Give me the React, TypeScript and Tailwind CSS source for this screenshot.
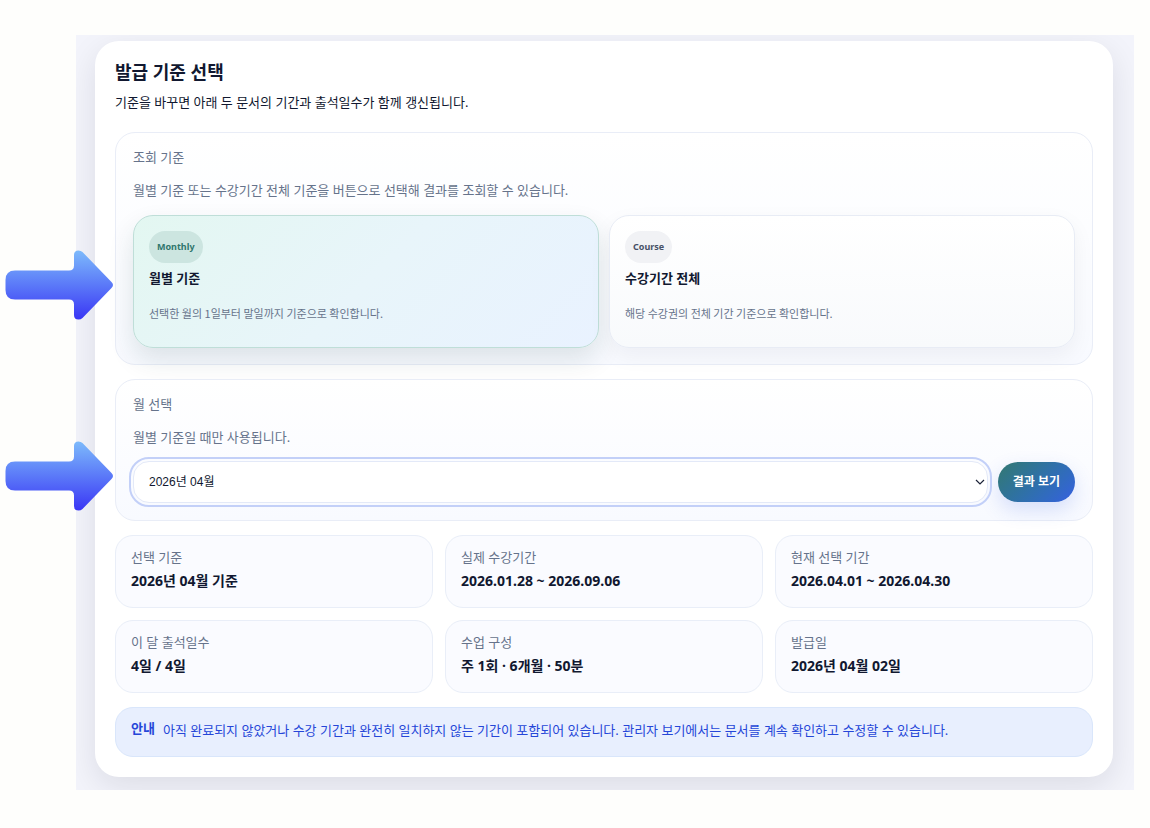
import { useState } from "react";
import clsx from "clsx";

type Basis = "monthly" | "course";

const bases: { id: Basis; badge: string; title: string; description: string }[] = [
  {
    id: "monthly",
    badge: "Monthly",
    title: "월별 기준",
    description: "선택한 월의 1일부터 말일까지 기준으로 확인합니다.",
  },
  {
    id: "course",
    badge: "Course",
    title: "수강기간 전체",
    description: "해당 수강권의 전체 기간 기준으로 확인합니다.",
  },
];

const stats = [
  { label: "선택 기준", value: "2026년 04월 기준" },
  { label: "실제 수강기간", value: "2026.01.28 ~ 2026.09.06" },
  { label: "현재 선택 기간", value: "2026.04.01 ~ 2026.04.30" },
  { label: "이 달 출석일수", value: "4일 / 4일" },
  { label: "수업 구성", value: "주 1회 · 6개월 · 50분" },
  { label: "발급일", value: "2026년 04월 02일" },
];

function Arrow({ id, className }: { id: string; className: string }) {
  return (
    <svg
      aria-hidden="true"
      width="110"
      height="72"
      viewBox="0 0 110 72"
      className={clsx("pointer-events-none absolute left-1", className)}
    >
      <defs>
        <linearGradient id={id} x1="0" y1="0" x2="0" y2="1">
          <stop offset="0" stopColor="#7dbafb" />
          <stop offset="0.5" stopColor="#5b79f8" />
          <stop offset="1" stopColor="#3a36f5" />
        </linearGradient>
      </defs>
      <path
        d="M11 21.5H65Q70 21.5 70 16.5V6Q70 1.5 74.5 1.5Q76.8 1.5 78.5 3L107.5 33Q110.500 36 107.5 39L78.5 69Q76.8 70.5 74.5 70.5Q70 70.5 70 66V55.5Q70 50.5 65 50.5H11Q1.5 50.5 1.5 41V31Q1.5 21.5 11 21.5Z"
        fill={`url(#${id})`}
      />
    </svg>
  );
}

const sectionClass =
  "rounded-[20px] border border-[#e9edf7] bg-linear-to-b from-white to-[#f8faff] px-[17px] pt-3.5";

export default function App() {
  const [basis, setBasis] = useState<Basis>("monthly");

  return (
    <main className="relative min-h-screen bg-[#fefefc] pt-[35px] pr-4 pb-9 pl-[76px] font-['Noto_Sans','Noto_Sans_CJK_KR',sans-serif] text-[13px] leading-5 text-[#111830]">
      <div className="overflow-hidden bg-[#f3f4fb] pt-1.5 pr-[21px] pb-[13px] pl-[19px]">
        <div className="rounded-[24px] bg-white p-5 shadow-[0_10px_32px_rgba(20,24,40,0.10)]">
          <h1 className="text-[18px] leading-[22px] font-bold">발급 기준 선택</h1>
          <p className="mt-[9px]">기준을 바꾸면 아래 두 문서의 기간과 출석일수가 함께 갱신됩니다.</p>

          <div className="mt-5 flex flex-col gap-3.5">
            <section aria-labelledby="basis-title" className={clsx(sectionClass, "pb-4")}>
              <h2 id="basis-title" className="text-[#66738b]">
                조회 기준
              </h2>
              <p className="mt-[13px] text-[#66738b]">
                월별 기준 또는 수강기간 전체 기준을 버튼으로 선택해 결과를 조회할 수 있습니다.
              </p>
              <div className="mt-[15px] grid grid-cols-2 gap-2.5">
                {bases.map((item) => {
                  const active = item.id === basis;
                  return (
                    <button
                      key={item.id}
                      type="button"
                      aria-pressed={active}
                      onClick={() => setBasis(item.id)}
                      className={clsx(
                        "flex flex-col items-start rounded-[20px] border px-[15px] pt-[15px] pb-6 text-left",
                        active
                          ? "border-[#bfded8] bg-linear-135 from-[#e3f7f1] via-[#e8f5fa] to-[#e9f2ff] shadow-[0_12px_26px_rgba(15,60,60,0.12)]"
                          : "border-[#e8ecf5] bg-linear-to-b from-white to-[#f8fafc] shadow-[0_8px_22px_rgba(15,23,42,0.05)]",
                      )}
                    >
                      <span
                        className={clsx(
                          "rounded-full px-2 text-[9px] leading-8 font-bold",
                          active ? "bg-[#cce5e0] text-[#2f766d]" : "bg-[#f1f2f5] text-[#475167]",
                        )}
                      >
                        {item.badge}
                      </span>
                      <strong className="mt-[5px] font-bold">{item.title}</strong>
                      <span className="mt-[15px] font-['Noto_Sans_CJK_KR',sans-serif] text-[11px] text-[#66738b]">
                        {item.description}
                      </span>
                    </button>
                  );
                })}
              </div>
            </section>

            <section className={clsx(sectionClass, "pb-[17px]")}>
              <label htmlFor="month" className="block text-[#66738b]">
                월 선택
              </label>
              <p id="month-hint" className="mt-[13px] text-[#66738b]">
                월별 기준일 때만 사용됩니다.
              </p>
              <div className="mt-3.5 flex items-center gap-2.5">
                <div className="relative grow">
                  <select
                    id="month"
                    aria-describedby="month-hint"
                    defaultValue="2026-04"
                    className="block h-[42px] w-full appearance-none rounded-[16px] border border-[#e3e9f8] bg-white px-[15px] font-['Liberation_Sans','Noto_Sans_CJK_KR',sans-serif] text-[12px] outline-2 outline-offset-2 outline-[#c3d0f8]"
                  >
                    <option value="2026-04">2026년 04월</option>
                  </select>
                  <svg
                    aria-hidden="true"
                    width="10"
                    height="6"
                    viewBox="0 0 10 6"
                    fill="none"
                    stroke="#1c2338"
                    strokeWidth="1.2"
                    className="pointer-events-none absolute top-[18px] right-[3px]"
                  >
                    <path d="M1 1L5 5L9 1" />
                  </svg>
                </div>
                <button
                  type="button"
                  className="h-10 rounded-full bg-linear-135 from-[#34786f] to-[#375fe0] px-[15px] text-[12px] font-bold text-white shadow-[0_8px_20px_rgba(55,95,230,0.18)]"
                >
                  결과 보기
                </button>
              </div>
            </section>

            <dl className="grid grid-cols-3 gap-3">
              {stats.map((stat) => (
                <div
                  key={stat.label}
                  className="rounded-[18px] border border-[#e9eef8] bg-[#fafbff] px-[15px] pt-[11px] pb-4"
                >
                  <dt className="text-[#66738b]">{stat.label}</dt>
                  <dd className="mt-1 text-[14px] leading-5 font-bold">{stat.value}</dd>
                </div>
              ))}
            </dl>

            <div
              role="note"
              className="flex items-start gap-2 rounded-[18px] border border-[#d9e6fb] bg-[#e8effe] px-[15px] pt-2.5 pb-4 text-[#2546d8]"
            >
              <strong className="shrink-0 font-bold">안내</strong>
              <p className="pt-0.5">
                아직 완료되지 않았거나 수강 기간과 완전히 일치하지 않는 기간이 포함되어 있습니다. 관리자
                보기에서는 문서를 계속 확인하고 수정할 수 있습니다.
              </p>
            </div>
          </div>
        </div>
      </div>

      <Arrow id="arrow-basis" className="top-[249px]" />
      <Arrow id="arrow-month" className="top-[440px]" />
    </main>
  );
}
